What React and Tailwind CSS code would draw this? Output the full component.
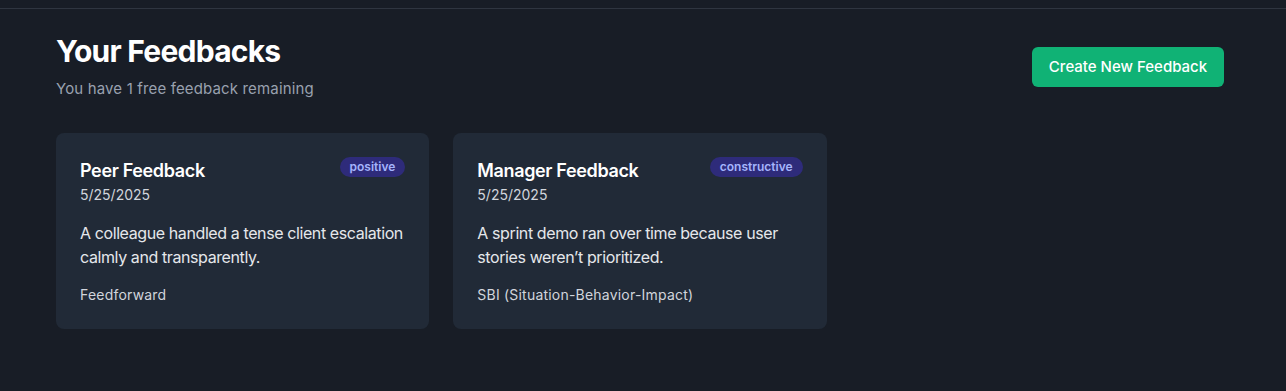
import React from 'react';

const feedbacks = [
  {
    title: 'Peer Feedback',
    date: '5/25/2025',
    tone: 'positive',
    text: 'A colleague handled a tense client escalation calmly and transparently.',
    model: 'Feedforward',
  },
  {
    title: 'Manager Feedback',
    date: '5/25/2025',
    tone: 'constructive',
    text: 'A sprint demo ran over time because user stories weren’t prioritized.',
    model: 'SBI (Situation-Behavior-Impact)',
  },
];

function FeedbackCard({ item }) {
  return (
    <div className="bg-[#212a37] rounded-lg p-6">
      <div className="flex items-start justify-between">
        <div>
          <h3 className="text-lg font-semibold text-white leading-7 tracking-[-0.02em]">{item.title}</h3>
          <p className="text-sm text-gray-300">{item.date}</p>
        </div>
        <span className="px-2.5 h-5 flex items-center rounded-full bg-[#2e2b7a] text-[#a5b4fc] text-xs font-semibold">
          {item.tone}
        </span>
      </div>
      <p className="mt-4 text-base text-gray-200 leading-6 tracking-[-0.025em]">{item.text}</p>
      <p className="mt-4 text-sm text-gray-300 tracking-[0.015em]">{item.model}</p>
    </div>
  );
}

export default function App() {
  return (
    <div
      className="min-h-[391px] bg-[#181d26] pt-2"
      style={{ fontFamily: 'Inter, "Noto Sans", sans-serif' }}
    >
      <div className="border-t border-[#2f3540] pt-6 pl-14 pr-[62px]">
        <div className="flex items-center justify-between mb-8">
          <div>
            <h1 className="text-3xl font-bold text-white leading-9 tracking-tight">Your Feedbacks</h1>
            <p className="mt-2 text-[15px] leading-6 text-gray-400 tracking-[0.01em]">You have 1 free feedback remaining</p>
          </div>
          <button className="h-10 w-48 rounded-md bg-[#10b275] text-white text-[15px] font-medium">
            Create New Feedback
          </button>
        </div>
        <div className="grid grid-cols-3 gap-6">
          {feedbacks.map((f) => (
            <FeedbackCard key={f.title} item={f} />
          ))}
        </div>
      </div>
    </div>
  );
}
